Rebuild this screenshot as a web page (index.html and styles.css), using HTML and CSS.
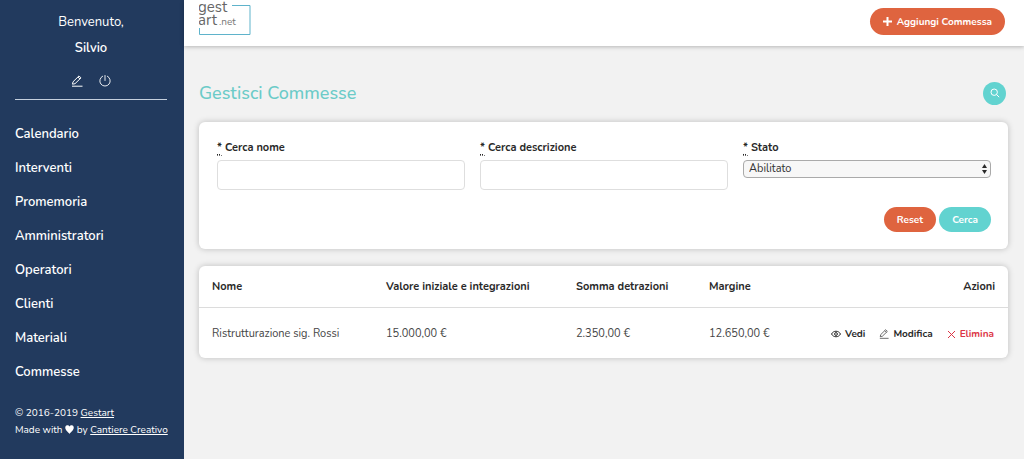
FILE: index.html
```html
<!DOCTYPE html>
<html lang="it">
<head>
<meta charset="utf-8">
<title>Gestisci Commesse</title>
<link rel="stylesheet" href="styles.css">
</head>
<body>
<div class="app">
  <aside class="sidebar">
    <div class="user">
      <p class="welcome">Benvenuto,</p>
      <p class="username">Silvio</p>
      <div class="user-links">
        <a href="#" aria-label="Modifica profilo"><svg width="12" height="12" viewBox="0 0 12 12" fill="none" stroke="currentColor" stroke-linejoin="round"><path d="M1.500 9.200 2 6.800 8 .9l2 2-6 5.800zM6.900 2l2 2M1 11.200h10.500"/></svg></a>
        <a href="#" aria-label="Esci"><svg width="12" height="12" viewBox="0 0 12 12" fill="none" stroke="currentColor" stroke-width=".9" stroke-linecap="round"><path d="M6 .5v5M3.600 1.200a5.200 5.200 0 1 0 4.800 0"/></svg></a>
      </div>
    </div>
    <nav class="menu">
      <a href="#">Calendario</a>
      <a href="#">Interventi</a>
      <a href="#">Promemoria</a>
      <a href="#">Amministratori</a>
      <a href="#">Operatori</a>
      <a href="#">Clienti</a>
      <a href="#">Materiali</a>
      <a href="#">Commesse</a>
    </nav>
    <footer class="credits">
      <p>© 2016-2019 <a href="#">Gestart</a></p>
      <p>Made with <svg class="heart" width="9" height="9" viewBox="0 0 10 10" fill="currentColor" aria-label="love"><path d="M5 10C4 8 .3 6 .3 3A2.500 2.500 0 0 1 5 1.600 2.500 2.500 0 0 1 9.700 3C9.700 6 6 8 5 10z"/></svg> by <a href="#">Cantiere Creativo</a></p>
    </footer>
  </aside>
  <div class="page">
    <header class="topbar">
      <a class="logo" href="#">
        <svg width="52" height="36" viewBox="0 0 52 36" aria-label="gestart.net">
          <path d="M33 5.500H51V34.500H.5V28" fill="none" stroke="#5fb3cb"/>
          <text x="-1" y="12" class="logo-text">gest</text>
          <text x="-1" y="25" class="logo-text">art</text>
          <text x="20" y="25" class="logo-small">.net</text>
        </svg>
      </a>
      <button class="btn btn-add" type="button"><svg width="9" height="9" viewBox="0 0 9 9" stroke="currentColor" stroke-width="2"><path d="M4.500 0v9M0 4.500h9"/></svg>Aggiungi Commessa</button>
    </header>
    <main class="content">
      <div class="heading">
        <h1>Gestisci Commesse</h1>
        <button class="round" type="button" aria-label="Cerca"><svg width="10" height="10" viewBox="0 0 10 10" fill="none" stroke="currentColor"><circle cx="4.200" cy="4.200" r="3.200"/><path d="m6.500 6.500 2.700 2.700"/></svg></button>
      </div>
      <form class="card filters">
        <div class="fields">
          <div class="field">
            <label for="nome"><abbr title="obbligatorio">*</abbr> Cerca nome</label>
            <input id="nome" type="text">
          </div>
          <div class="field">
            <label for="descrizione"><abbr title="obbligatorio">*</abbr> Cerca descrizione</label>
            <input id="descrizione" type="text">
          </div>
          <div class="field">
            <label for="stato"><abbr title="obbligatorio">*</abbr> Stato</label>
            <div class="select">
              <select id="stato"><option>Abilitato</option></select>
              <svg class="arrows" width="5" height="10" viewBox="0 0 5 10" fill="currentColor"><path d="M0 4 2.500 0 5 4zM0 6h5L2.500 10z"/></svg>
            </div>
          </div>
        </div>
        <div class="buttons">
          <button class="btn" type="reset">Reset</button>
          <button class="btn btn-search" type="button">Cerca</button>
        </div>
      </form>
      <div class="card">
        <table>
          <colgroup><col class="c-name"><col class="c-value"><col class="c-sum"><col class="c-margin"><col></colgroup>
          <thead>
            <tr><th>Nome</th><th>Valore iniziale e integrazioni</th><th>Somma detrazioni</th><th>Margine</th><th class="end">Azioni</th></tr>
          </thead>
          <tbody>
            <tr>
              <td>Ristrutturazione sig. Rossi</td><td>15.000,00 €</td><td>2.350,00 €</td><td>12.650,00 €</td>
              <td>
                <div class="actions">
                  <a href="#"><svg width="10" height="10" viewBox="0 0 10 10" fill="none" stroke="currentColor"><path d="M.5 5C2.500 1.300 7.500 1.300 9.500 5 7.500 8.700 2.500 8.700.5 5z"/><circle cx="5" cy="5" r="1.400"/></svg>Vedi</a>
                  <a href="#"><svg width="10" height="10" viewBox="0 0 12 12" fill="none" stroke="currentColor" stroke-width=".8" stroke-linejoin="round"><path d="M1.500 9.200 2 6.800 8 .9l2 2-6 5.800zM6.900 2l2 2M1 11.200h10.500"/></svg>Modifica</a>
                  <a class="danger" href="#"><svg width="9" height="9" viewBox="0 0 9 9" stroke="currentColor"><path d="m1 1 7 7M8 1 1 8"/></svg>Elimina</a>
                </div>
              </td>
            </tr>
          </tbody>
        </table>
      </div>
    </main>
  </div>
</div>
</body>
</html>
```
FILE: styles.css
```css
* { box-sizing: border-box; }
body {
  margin: 0;
  font-family: Nunito, Lato, sans-serif;
  font-size: 11px;
  line-height: 16px;
  color: #292929;
  background: #f2f2f2;
}
p, h1 { margin: 0; }
a { color: inherit; text-decoration: none; }
button, input, select { font: inherit; }
svg { flex: none; }

.app { display: flex; min-height: 100vh; }
.sidebar {
  flex: none;
  width: 184px;
  padding: 9px 17px 8px 15px;
  background: #223a5e;
  color: #fff;
}
.user {
  padding-bottom: 12px;
  border-bottom: 1px solid #c5cfdd;
  font-size: 13px;
  line-height: 26px;
  text-align: center;
}
.username { font-weight: 600; }
.user-links {
  display: flex;
  justify-content: center;
  gap: 16px;
  padding-top: 14px;
}
.user-links a { display: flex; }
.menu {
  display: flex;
  flex-direction: column;
  padding-top: 17px;
  font-size: 13px;
  font-weight: 600;
  line-height: 34px;
}
.credits {
  padding-top: 16px;
  font-size: 10px;
  line-height: 17px;
  white-space: nowrap;
}
.credits a { text-decoration: underline; }
.heart { vertical-align: -1px; }

.page { flex: 1; min-width: 0; }
.topbar {
  display: flex;
  justify-content: space-between;
  align-items: flex-start;
  height: 46px;
  padding: 0 19px 0 15px;
  background: #fff;
  box-shadow: 0 1px 4px rgba(0, 0, 0, .25);
}
.logo { display: flex; }
.logo-text { font-size: 15px; fill: #666; }
.logo-small { font-size: 10px; fill: #777; }
.btn {
  display: inline-flex;
  align-items: center;
  justify-content: center;
  height: 25px;
  padding: 0 13px;
  border: 0;
  border-radius: 14px;
  background: #df643f;
  color: #fff;
  font-size: 10px;
  font-weight: 700;
}
.btn-add { gap: 5px; height: 27px; margin-top: 8px; }
.btn-search { background: #62d3d0; }

.content { padding: 35px 16px 16px 15px; }
.heading {
  display: flex;
  justify-content: space-between;
  align-items: center;
  padding-right: 2px;
}
h1 { font-size: 18px; line-height: 24px; font-weight: 500; color: #6bcbc8; }
.round {
  display: flex;
  align-items: center;
  justify-content: center;
  width: 23px;
  height: 23px;
  padding: 0;
  border: 0;
  border-radius: 50%;
  background: #62d3d0;
  color: #fff;
}
.card {
  margin-top: 17px;
  border-radius: 6px;
  background: #fff;
  box-shadow: 0 0 6px rgba(0, 0, 0, .22);
}
.filters { padding: 18px 17px 17px 18px; }
.fields { display: grid; grid-template-columns: repeat(3, 1fr); gap: 15px; }
.field { display: flex; flex-direction: column; gap: 4px; }
label { font-weight: 700; }
abbr { text-decoration: underline dotted; text-underline-offset: 3px; border-bottom: 1px dotted #777; }
input {
  width: 100%;
  height: 30px;
  padding: 0 8px;
  border: 1px solid #dedede;
  border-radius: 4px;
  background: #fff;
}
.select { position: relative; }
select {
  display: block;
  appearance: none;
  width: 100%;
  height: 18px;
  padding: 0 16px 0 5px;
  border: 1px solid #aaa;
  border-radius: 4px;
  background: #f7f7f7;
  color: #333;
  line-height: 16px;
}
.arrows { position: absolute; top: 4px; right: 4px; pointer-events: none; }
.buttons { display: flex; justify-content: flex-end; gap: 3px; padding-top: 17px; }

table { width: 100%; table-layout: fixed; border-collapse: collapse; }
.c-name { width: 174px; }
.c-value { width: 190px; }
.c-sum { width: 133px; }
.c-margin { width: 100px; }
th, td { padding: 2px 0 0 13px; text-align: left; white-space: nowrap; }
th { height: 41px; font-weight: 700; border-bottom: 1px solid #dcdcdc; }
td { height: 51px; color: #444; }
th.end { padding-right: 13px; text-align: right; }
.actions {
  display: flex;
  justify-content: flex-end;
  gap: 14px;
  padding: 1px 14px 0 0;
  color: #292929;
  font-size: 10px;
  font-weight: 700;
}
.actions a { display: flex; align-items: center; gap: 4px; }
.actions .danger { color: #dc3545; }
```
